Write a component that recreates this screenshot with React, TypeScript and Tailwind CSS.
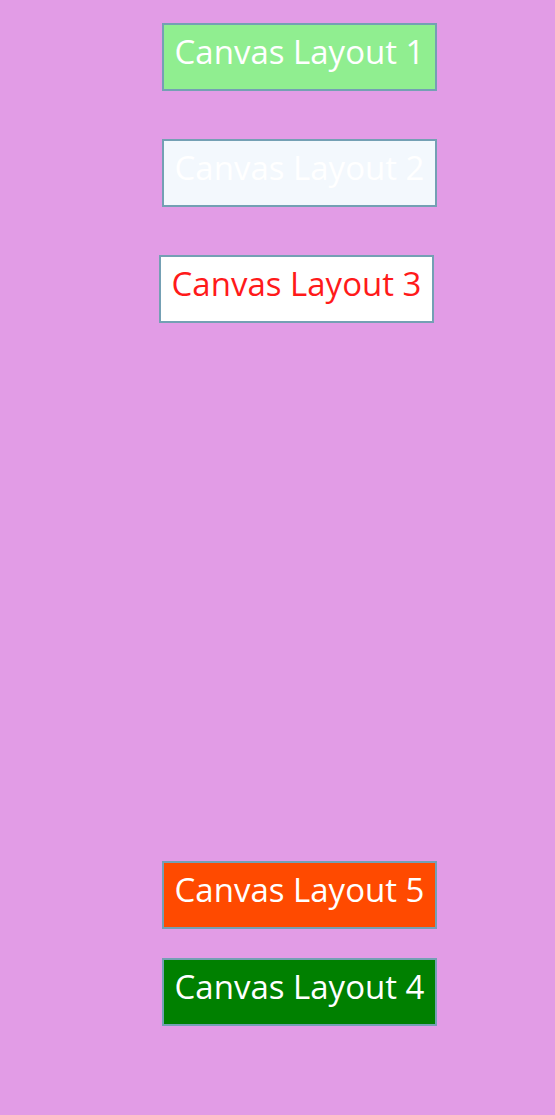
const layouts = [
  { id: 1, label: 'Canvas Layout 1', box: 'ml-[3px] bg-[#90ee90] text-white' },
  { id: 2, label: 'Canvas Layout 2', box: 'ml-[3px] mt-[48px] bg-[#f3f8fd] text-white' },
  { id: 3, label: 'Canvas Layout 3', box: 'mt-[48px] bg-white text-[#ff1a1a]' },
];

const bottomLayouts = [
  { id: 5, label: 'Canvas Layout 5', box: 'ml-[3px] bg-[#ff4a00] text-white' },
  { id: 4, label: 'Canvas Layout 4', box: 'ml-[3px] mt-[29px] bg-[#008000] text-white' },
];

function LayoutTile({ label, box }: { label: string; box: string }) {
  return (
    <div
      className={`w-[275px] h-[68px] border-2 border-[#74a0b4] pt-[9px] text-center text-[33px] leading-[35px] whitespace-nowrap ${box}`}
      style={{ fontFamily: '"Open Sans", Tahoma, sans-serif' }}
    >
      {label}
    </div>
  );
}

export default function App() {
  return (
    <div className="w-[555px] h-[1115px] bg-[#e29ce6] pl-[159px] pt-[23px] flex flex-col">
      {layouts.map((l) => (
        <LayoutTile key={l.id} label={l.label} box={l.box} />
      ))}
      <div className="h-[538px]" />
      {bottomLayouts.map((l) => (
        <LayoutTile key={l.id} label={l.label} box={l.box} />
      ))}
    </div>
  );
}
